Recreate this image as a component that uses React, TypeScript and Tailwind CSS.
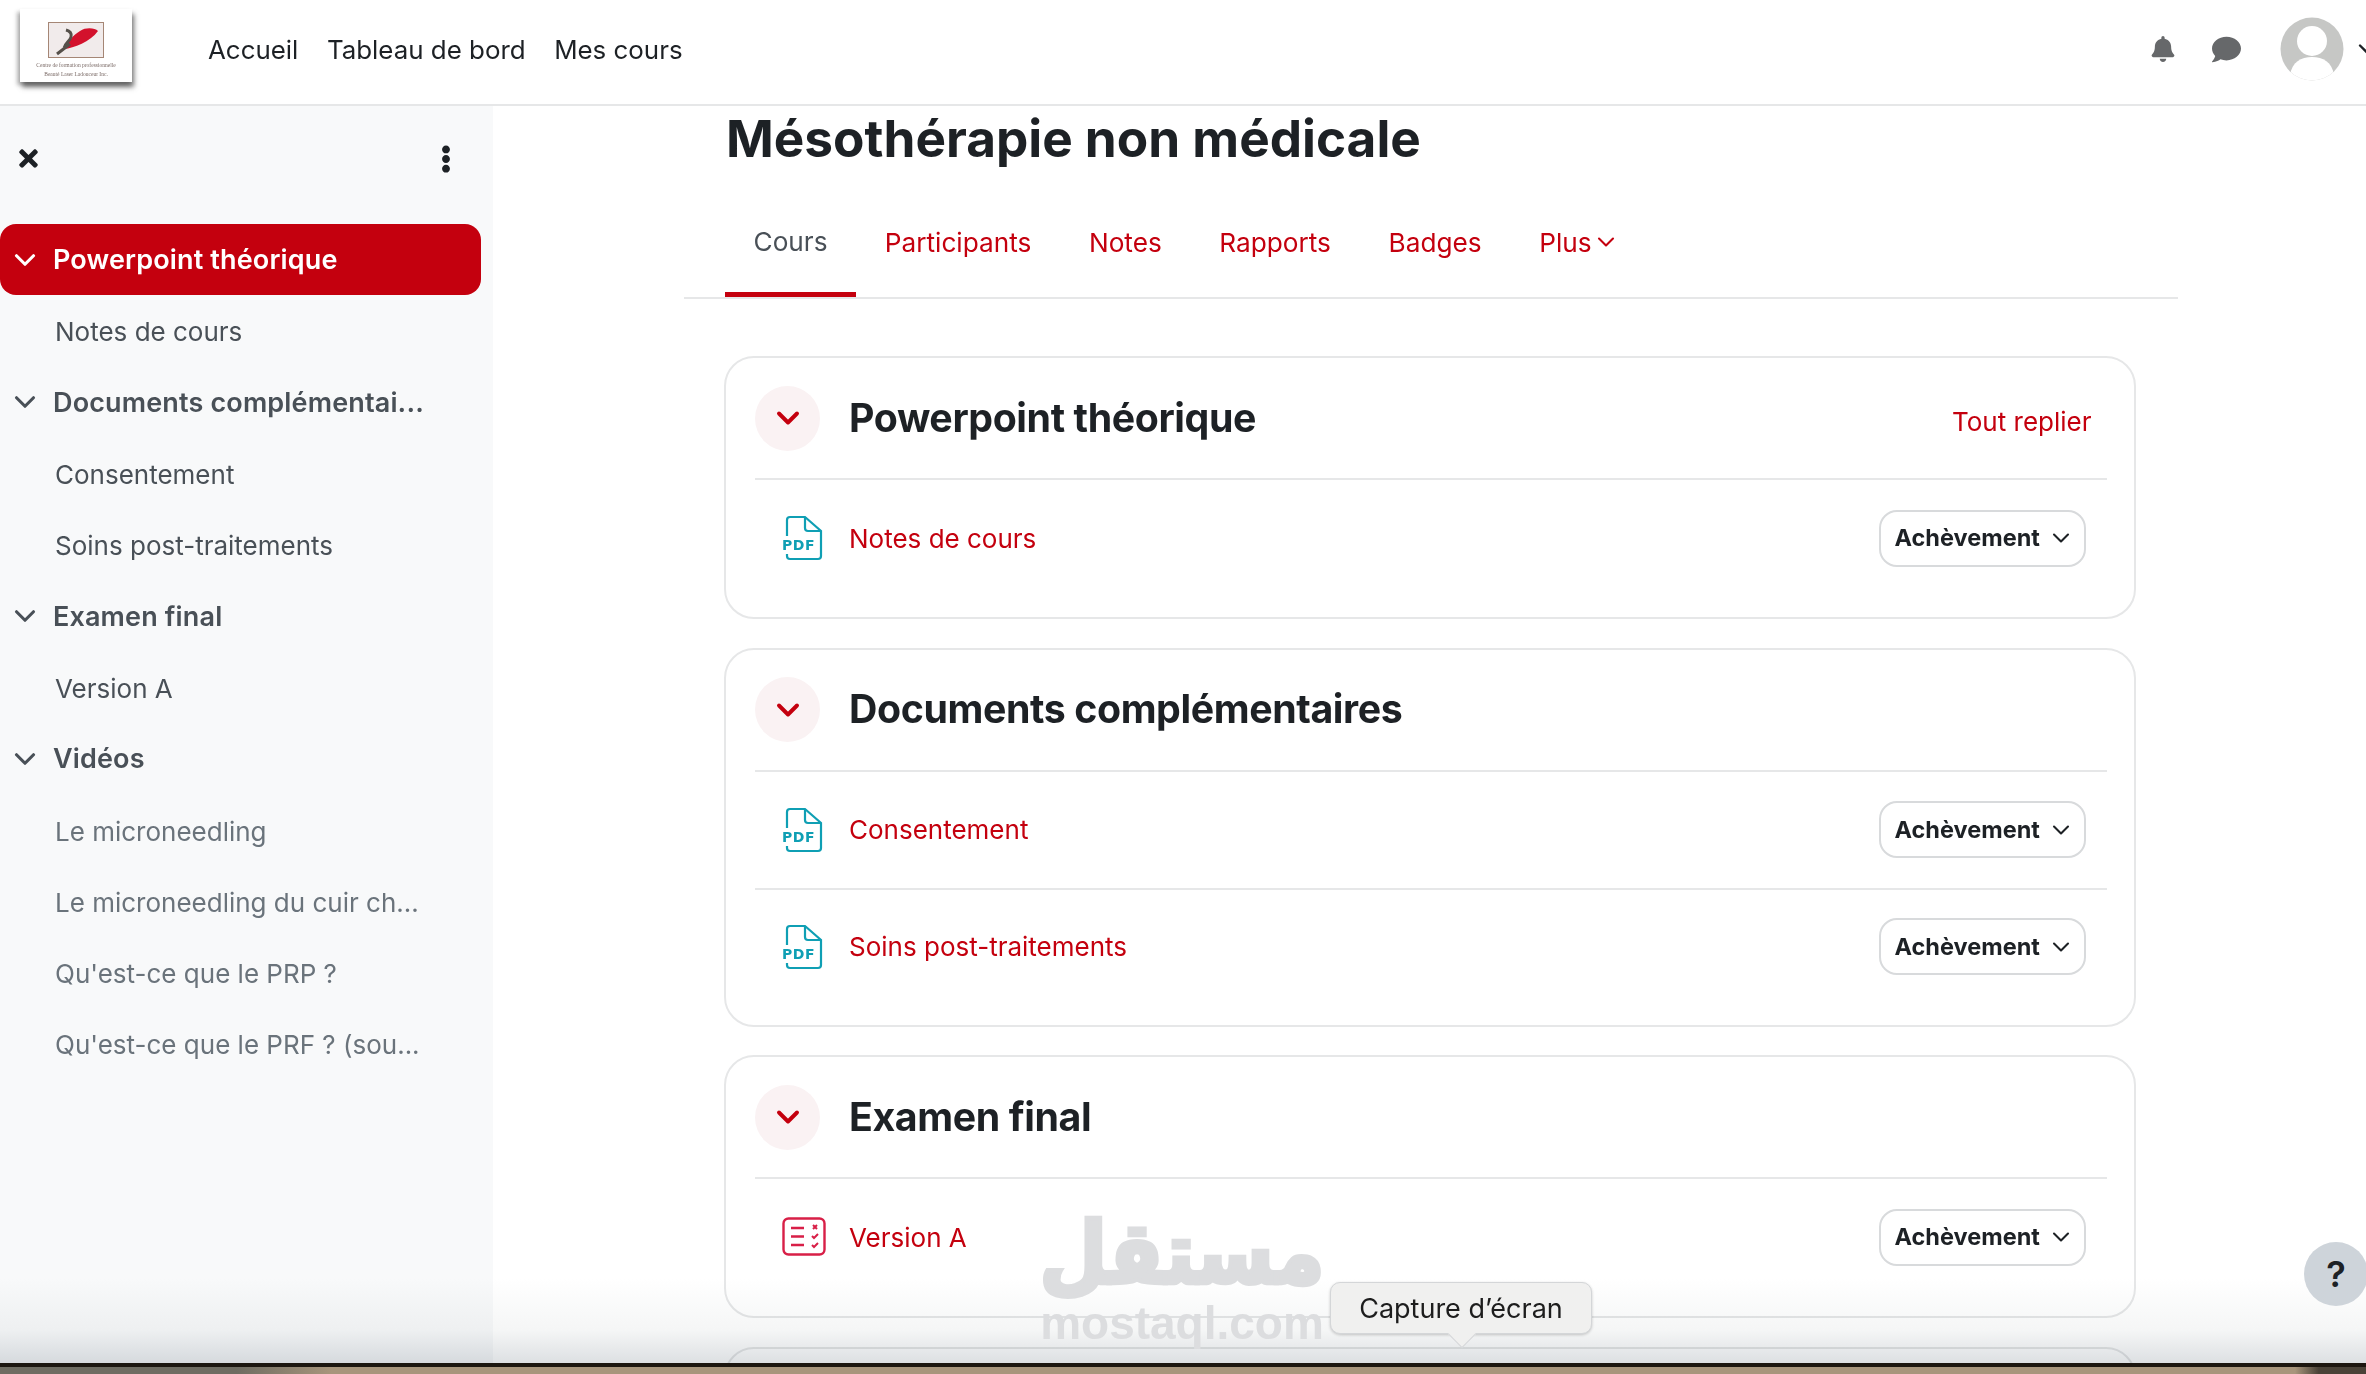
import { ChevronDown } from 'lucide-react'
import { FaBell, FaComment, FaEllipsisV, FaTimes } from 'react-icons/fa'

const navLinks = ['Accueil', 'Tableau de bord', 'Mes cours']
const tabs = ['Participants', 'Notes', 'Rapports', 'Badges']

const sidebarItems = [
  { label: 'Powerpoint théorique', type: 'active' },
  { label: 'Notes de cours', type: 'item' },
  { label: 'Documents complémentai...', type: 'section' },
  { label: 'Consentement', type: 'item' },
  { label: 'Soins post-traitements', type: 'item' },
  { label: 'Examen final', type: 'section' },
  { label: 'Version A', type: 'item' },
  { label: 'Vidéos', type: 'section' },
  { label: 'Le microneedling', type: 'muted' },
  { label: 'Le microneedling du cuir ch...', type: 'muted' },
  { label: "Qu'est-ce que le PRP ?", type: 'muted' },
  { label: "Qu'est-ce que le PRF ? (sou...", type: 'muted' },
]

const sections = [
  { title: 'Powerpoint théorique', collapse: true, activities: [{ name: 'Notes de cours', kind: 'pdf' }] },
  {
    title: 'Documents complémentaires',
    activities: [
      { name: 'Consentement', kind: 'pdf' },
      { name: 'Soins post-traitements', kind: 'pdf' },
    ],
  },
  { title: 'Examen final', activities: [{ name: 'Version A', kind: 'quiz' }] },
]

function PdfIcon() {
  return (
    <svg width="42" height="46" viewBox="0 0 42 46" fill="none" className="shrink-0">
      <path
        d="M5 21V5a3 3 0 0 1 3-3h15l16 14v25a3 3 0 0 1-3 3H8a3 3 0 0 1-3-3v-2"
        stroke="#0f9fb4"
        strokeWidth="2.2"
      />
      <path d="M23 2v11a3 3 0 0 0 3 3h13" stroke="#0f9fb4" strokeWidth="2.2" />
      <text
        x="0"
        y="35"
        fill="#0f9fb4"
        fontSize="14"
        fontWeight="800"
        letterSpacing="0.6"
        fontFamily="'DejaVu Sans', sans-serif"
      >
        PDF
      </text>
    </svg>
  )
}

function QuizIcon() {
  return (
    <svg width="44" height="40" viewBox="0 0 44 40" fill="none" className="shrink-0">
      <rect x="1.5" y="1.5" width="41" height="36" rx="5" stroke="#d81f47" strokeWidth="2.4" />
      <path d="M9 11h13M9 19.500h13M9 28h13" stroke="#d81f47" strokeWidth="2.4" />
      <path d="M31 8l4 4M35 8l-4 4M30 19l2 2 4-4M30 28l2 2 4-4" stroke="#d81f47" strokeWidth="2" />
    </svg>
  )
}

function Logo() {
  return (
    <div className="-mt-[14px] ml-5 flex h-[73px] w-[112px] flex-col items-center bg-white pt-[13px] shadow-[2px_5px_5px_rgba(70,70,70,0.75),-3px_3px_4px_rgba(90,90,90,0.4)]">
      <svg width="56" height="36" viewBox="0 0 56 36">
        <rect x="0.500" y="0.500" width="55" height="35" fill="#f1ebeb" stroke="#a58675" />
        <path d="M16 27C26 26 42 20 50 9 47 6 38 5 32 9 25 13 20 20 16 27Z" fill="#d3112c" />
        <path d="M9 32 22 22M18 8c4 1 6 3 5 7-1 4-6 6-7 11" stroke="#55504a" strokeWidth="3" fill="none" />
      </svg>
      <div className="mt-[3px] text-center font-['Liberation_Serif',serif] text-[5.500px] leading-[9px] whitespace-nowrap text-[#7a6a66]">
        <div>Centre de formation professionnelle</div>
        <div>Beauté Laser Ladouceur Inc.</div>
      </div>
    </div>
  )
}

function Header() {
  return (
    <header className="relative flex h-[106px] shrink-0 items-center border-b-2 border-[#e6e7e8] bg-white">
      <Logo />
      <nav className="-mt-[3px] ml-[76px] flex gap-[28.500px] text-[25.900px] text-[#1d2125]">
        {navLinks.map((link) => (
          <span key={link}>{link}</span>
        ))}
      </nav>
      <div className="-mt-[6px] ml-auto flex items-center text-[#66686a]">
        <FaBell className="mr-[36px] h-[26px] w-[26px]" />
        <FaComment className="mr-[39px] h-[29px] w-[29px]" />
        <svg width="64" height="64" viewBox="0 0 64 64" className="mr-[9px]">
          <defs>
            <clipPath id="avatar-clip">
              <circle cx="32" cy="32" r="31.500" />
            </clipPath>
          </defs>
          <circle cx="32" cy="32" r="31.500" fill="#c6c7c5" />
          <g clipPath="url(#avatar-clip)" fill="#fff">
            <circle cx="32" cy="24" r="15" />
            <path d="M10 58c2-13 11-18 22-18s20 5 22 18v8H10Z" />
          </g>
        </svg>
        <ChevronDown className="-mr-[15px] h-[28px] w-[28px] text-[#1d2125]" strokeWidth={2} />
      </div>
    </header>
  )
}

function Sidebar() {
  return (
    <aside className="w-[493px] shrink-0 bg-[#f8f9fa]">
      <div className="flex h-[118px] items-start justify-between pt-[39px] pr-[33px] pl-[15px] text-[#1d2125]">
        <FaTimes className="h-[27px] w-[27px]" />
        <FaEllipsisV className="h-[28px] w-[28px]" />
      </div>
      <div className="flex flex-col pr-[12px]">
        {sidebarItems.map((item) => {
          if (item.type === 'active') {
            return (
              <div
                key={item.label}
                className="flex h-[71.300px] items-center rounded-[16px] bg-[#c4000e] pl-[8px] text-[27px] font-semibold tracking-[0.15px] text-white"
              >
                <ChevronDown className="mr-[11px] h-[34px] w-[34px] shrink-0" strokeWidth={2.2} />
                <span className="pt-[2px]">{item.label}</span>
              </div>
            )
          }
          if (item.type === 'section') {
            return (
              <div
                key={item.label}
                className="flex h-[71.300px] items-center pl-[8px] text-[27px] font-semibold tracking-[0.15px] text-[#495057]"
              >
                <ChevronDown className="mr-[11px] h-[34px] w-[34px] shrink-0" strokeWidth={2.2} />
                <span className="pt-[2px]">{item.label}</span>
              </div>
            )
          }
          return (
            <div
              key={item.label}
              className={`flex h-[71.300px] items-center pt-[2px] pl-[55px] text-[26px] ${
                item.type === 'muted' ? 'text-[#6a737b]' : 'text-[#495057]'
              }`}
            >
              {item.label}
            </div>
          )
        })}
      </div>
    </aside>
  )
}

function Activity({ name, kind, first }: { name: string; kind: string; first: boolean }) {
  return (
    <div className={`flex h-[116px] items-center pr-[21.500px] pl-[27px] ${first ? '' : 'border-t-2 border-[#e6e7e8]'}`}>
      <div className="flex w-[67px] items-center">{kind === 'pdf' ? <PdfIcon /> : <QuizIcon />}</div>
      <span className="text-[26px] text-[#c4000e]">{name}</span>
      <div className="ml-auto flex h-[57px] w-[207px] items-center justify-between rounded-[18px] border-2 border-[#d8dadc] pr-[9px] pl-[14px] text-[23.500px] font-bold text-[#1d2125]">
        Achèvement
        <ChevronDown className="h-[28px] w-[28px] shrink-0" strokeWidth={1.800} />
      </div>
    </div>
  )
}

function Section({ section }: { section: (typeof sections)[number] }) {
  return (
    <section className="rounded-[30px] border-2 border-[#e6e7e8] bg-white pr-[27px] pb-[21px] pl-[29px]">
      <div className="flex h-[122px] items-center border-b-2 border-[#e6e7e8]">
        <div className="flex h-[65px] w-[65px] items-center justify-center rounded-full bg-[#faf2f3]">
          <ChevronDown className="h-[36px] w-[36px] text-[#c4000e]" strokeWidth={2.6} />
        </div>
        <h3 className="ml-[29px] text-[39.300px] font-bold tracking-[-0.4px] text-[#1d2125]">{section.title}</h3>
        {section.collapse && (
          <span className="mt-[6px] mr-[15.500px] ml-auto text-[26px] text-[#c4000e]">Tout replier</span>
        )}
      </div>
      {section.activities.map((activity, i) => (
        <Activity key={activity.name} name={activity.name} kind={activity.kind} first={i === 0} />
      ))}
    </section>
  )
}

function Main() {
  return (
    <main className="flex-1 overflow-hidden bg-white pl-[191px]">
      <div className="w-[1494px]">
        <h1 className="mt-[1px] ml-[42px] h-[62px] text-[51.300px] leading-[62px] font-bold text-[#1d2125]">
          Mésothérapie non médicale
        </h1>
        <div className="mt-[21px] flex h-[109px] items-center border-b-2 border-[#e6e7e8] pl-[41px] text-[26.200px] text-[#c4000e]">
          <div className="flex h-full flex-none items-center border-b-[5px] border-[#c4000e] px-[28.500px] pt-[2px] text-[#495057]">
            Cours
          </div>
          {tabs.map((tab) => (
            <div key={tab} className="-mt-[2px] px-[28.800px]">
              {tab}
            </div>
          ))}
          <div className="-mt-[2px] flex items-center px-[28.800px]">
            Plus
            <ChevronDown className="h-[28px] w-[28px]" strokeWidth={1.800} />
          </div>
        </div>
        <div className="mt-[57px] mr-[42px] ml-[40px] flex flex-col gap-[28.500px]">
          {sections.map((section) => (
            <Section key={section.title} section={section} />
          ))}
          <section className="h-[120px] rounded-[30px] border-2 border-[#e6e7e8] bg-white" />
        </div>
      </div>
    </main>
  )
}

export default function App() {
  return (
    <div className="relative flex h-[1374px] w-[2366px] flex-col overflow-hidden bg-white font-['Inter',sans-serif]">
      <Header />
      <div className="flex min-h-0 flex-1">
        <Sidebar />
        <Main />
      </div>

      {/* fade + desktop strip at the bottom of the capture */}
      <div className="pointer-events-none absolute right-0 bottom-[10px] left-0 h-[85px] bg-[linear-gradient(180deg,#ffffff_0%,#f5f6f6_60%,#dcdfe2_100%)] mix-blend-multiply" />
      <div className="absolute right-0 bottom-0 left-0 h-[11px] border-t-[4px] border-[#1c1610] bg-[linear-gradient(90deg,#6f6c62_0%,#6f6c62_10%,#a8957c_14%,#a8957c_97%,#4a4238_98%)]" />

      {/* watermark */}
      <div className="pointer-events-none absolute top-[1205px] left-[1040px] flex w-[284px] flex-col items-center text-[#dcdddf]">
        <div
          dir="rtl"
          className="origin-center scale-y-[1.1] font-['DejaVu_Sans',sans-serif] text-[78px] leading-[96px] font-bold [-webkit-text-stroke:4px_#dcdddf]"
        >
          مستقل
        </div>
        <div className="font-['Liberation_Sans',sans-serif] text-[46px] leading-[44px] font-bold">mostaql.com</div>
      </div>

      {/* screenshot tooltip */}
      <div className="absolute top-[1282px] left-[1330px] flex h-[52px] w-[262px] items-center justify-center rounded-[10px] border border-[#d4d6d8] bg-[#f0f0ef] pt-[2px] text-[27px] text-[#1d1d1d] shadow-[0_1px_3px_rgba(0,0,0,0.2)]">
        Capture d’écran
        <div className="absolute top-[41px] left-[121px] h-[20px] w-[20px] rotate-45 border-r border-b border-[#d4d6d8] bg-[#f0f0ef]" />
      </div>

      {/* help button */}
      <div className="absolute top-[1242px] left-[2304px] flex h-[64px] w-[64px] items-center justify-center rounded-full bg-[#ced4da] text-[36px] font-semibold text-[#1d2125]">
        ?
      </div>
    </div>
  )
}
